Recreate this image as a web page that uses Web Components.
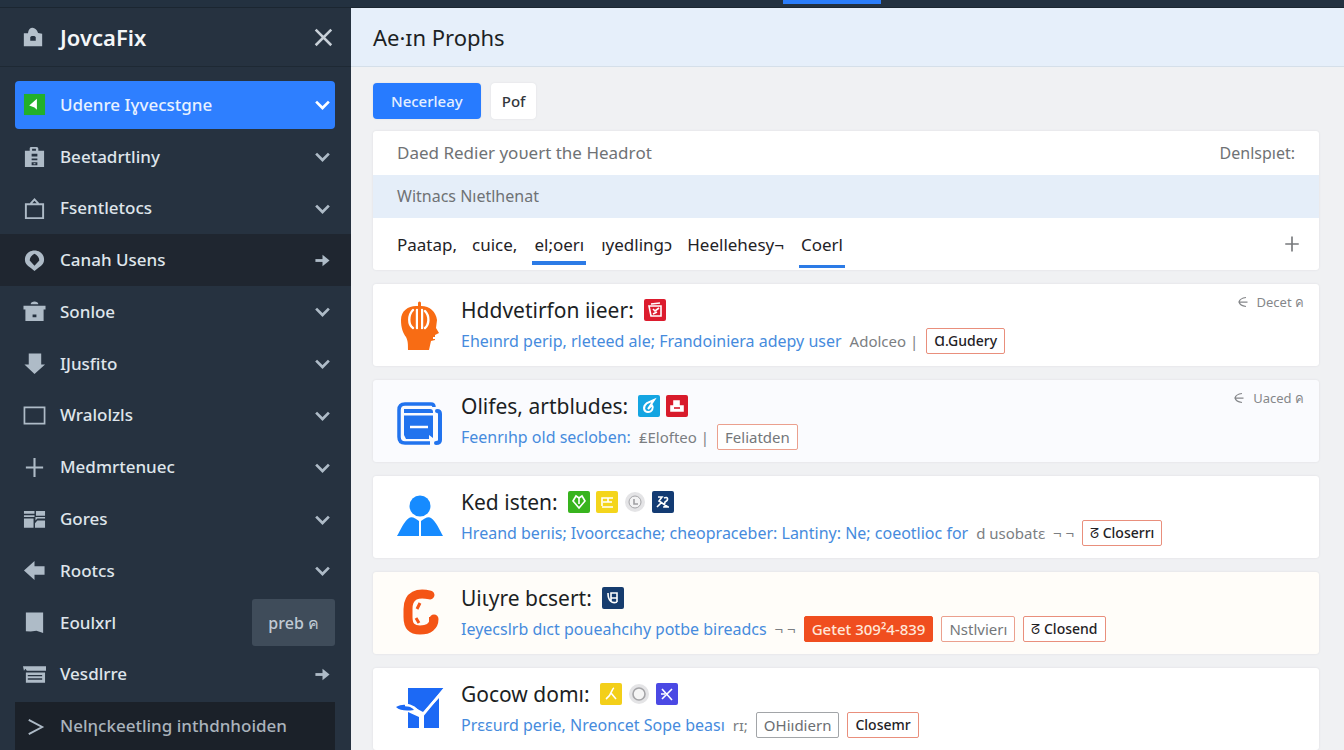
<!DOCTYPE html>
<html lang="en">
<head>
<meta charset="utf-8">
<title>JovcaFix</title>
<style>
  body {
    margin: 0;
    background: #f0f1f3;
    color: #1c1f24;
    font-family: "Noto Sans", "Open Sans", sans-serif;
  }
</style>
</head>
<body>
<app-shell>
  <side-bar slot="side" brand="JovcaFix">
    <nav-item icon="play" trail="chevron" state="active">Udenre Iɣvecstgne</nav-item>
    <nav-item icon="case" trail="chevron">Beetadrtliny</nav-item>
    <nav-item icon="bag" trail="chevron">Fsentletocs</nav-item>
    <nav-item icon="pin" trail="arrow" state="shaded">Canah Usens</nav-item>
    <nav-item icon="pot" trail="chevron">Sonloe</nav-item>
    <nav-item icon="down" trail="chevron">IJusfito</nav-item>
    <nav-item icon="frame" trail="chevron">Wralolzls</nav-item>
    <nav-item icon="plus" trail="chevron">Medmrtenuec</nav-item>
    <nav-item icon="grid" trail="chevron">Gores</nav-item>
    <nav-item icon="left" trail="chevron">Rootcs</nav-item>
    <nav-item icon="note" badge="preb ค">Eoulxrl</nav-item>
    <nav-item icon="stack" trail="arrow">Vesdlrre</nav-item>
    <nav-item icon="prompt" state="dark">Nelηckeetling inthdnhoiden</nav-item>
  </side-bar>

  <page-header slot="header">Ae·ɪn Prophs</page-header>

  <action-button kind="primary" slot="actions">Necerleay</action-button>
  <action-button slot="actions">Pof</action-button>

  <filter-panel>
    <span slot="title">Daed Redier yoυert the Headrοt</span>
    <span slot="aside">Denlspıet:</span>
    <span slot="sub">Witnacs Nıetlhenat</span>
    <tab-link slot="tabs">Paatap,</tab-link>
    <tab-link slot="tabs">cuice,</tab-link>
    <tab-link slot="tabs" mark="high">el;oerı</tab-link>
    <tab-link slot="tabs">ıyedlingɔ</tab-link>
    <tab-link slot="tabs">Heellehesy¬</tab-link>
    <tab-link slot="tabs" mark="low">Coerl</tab-link>
  </filter-panel>

  <issue-card icon="head" heading="Hddvetirfon iieer:" badges="seal" action="Decet ค">
    <a href="#">Eheınrd perip, rleteed ale; Frandoiniera adepy user</a>
    <span>Adolceo |</span>
    <tag-chip kind="strong">Ɑ.Gudery</tag-chip>
  </issue-card>
  <issue-card icon="book" heading="Olifes, artbludes:" badges="leaf person" action="Uaced ค" tone="cool">
    <a href="#">Feenrıhp old secloben:</a>
    <span>₤Elofteo |</span>
    <tag-chip>Feliatden</tag-chip>
  </issue-card>
  <issue-card icon="user" heading="Ked isten:" badges="bulb card ring pair">
    <a href="#">Hreand berıis; Ivoorcɛache; cheopraceber: Lantiny: Ne; coeotlioc for</a>
    <span>d usobatɛ &nbsp;¬ ¬</span>
    <tag-chip kind="strong">ᘔ Closerrı</tag-chip>
  </issue-card>
  <issue-card icon="cee" heading="Uiɩyre bcsert:" badges="coin" tone="warm">
    <a href="#">Ieyecslrb dıct poueahcıhy ƿotbe bireadcs</a>
    <span>¬ ¬</span>
    <tag-chip kind="solid">Getet 309²4-839</tag-chip>
    <tag-chip>Nstlvierı</tag-chip>
    <tag-chip kind="strong">ᘔ Closend</tag-chip>
  </issue-card>
  <issue-card icon="check" heading="Gocow domı:" badges="runner hoop cross">
    <a href="#">Prɛɛurd perie, Nreoncet Sope beası</a>
    <span>rɪ;</span>
    <tag-chip kind="grey">OHiıdiern</tag-chip>
    <tag-chip kind="strong">Closemr</tag-chip>
  </issue-card>
</app-shell>

<script>
// 24x24 glyphs, drawn in currentColor
const GLYPHS = {
  lock: `<path fill="currentColor" fill-rule="evenodd" d="M2 8h4.500C7 4 9 2 11.500 2S16.500 4.500 17.500 7.500l4.500 1V22H2V9zM9 12v4h6v-4l-1.500-1h-3z"/>`,
  play: `<path fill="#22b02a" d="M1 1h22v22H1z"/><path fill="#fff" d="M14.500 6v11.500L12 15l-5.500-2z"/>`,
  case: `<path fill="currentColor" fill-rule="evenodd" d="M2 6h5V3.500C7 2.500 8 2 9 2h5c1.500 0 2 1 2 2v2h6v17H2zM9.500 4v2h4V4zM9 9v3h6V9zm0 5v2h6v-2zm0 4v3h6v-3zm2 1h2v1h-2z"/>`,
  bag: `<path fill="none" stroke="currentColor" stroke-width="2" d="M3 7.500h18V22H3zM8 7l4-4.500L16 7"/>`,
  pin: `<path fill="currentColor" fill-rule="evenodd" d="M12 1.500C6.500 1.500 2 5.500 2 11c0 5 4 7.500 6.500 9l3.500 3 3.500-3c2.500-1.500 6.500-4 6.500-9 0-5.500-4.500-9.500-10-9.500zM12 5c3 1.500 5 4 5 7l-5 5.500L7 12c0-3 2-5.500 5-7z"/>`,
  pot: `<path fill="currentColor" fill-rule="evenodd" d="M8 4.500c0-2 2-3 4-3s4 1 4 3zM.500 6h23v4h-2v12h-19V10h-2zm9.500 9v3h4v-3z"/>`,
  down: `<path fill="currentColor" d="M6 1.500h13V13h4L12 23 1.500 13H6z"/>`,
  frame: `<path fill="none" stroke="currentColor" stroke-width="1.800" d="M1.500 3.500h21v17h-21z"/>`,
  plus: `<path fill="none" stroke="currentColor" stroke-width="2.200" d="M12 2v20M3 12h18"/>`,
  grid: `<path fill="currentColor" d="M1 3h11v3H1zM1 7.500h11v2H1zM1 11h10v9.500H1zM13.500 3H23v5h-9.500zM13 9.500h10V11h-8l-2 2zM15 13h8v7.500H12.500V16z"/>`,
  left: `<path fill="currentColor" d="M1 12 12 2v5.500h10.500v9H12V22z"/>`,
  note: `<path fill="currentColor" d="M3 1.500h18V23l-3-1-4-1.500L8 21.500 3 21z"/>`,
  stack: `<path fill="currentColor" fill-rule="evenodd" d="M0 3.500h24V8H4L2.500 6 1 8zM3 10h20v10.500H3zm2 2.500v1.200h15v-1.200zM5 16v1.500h15V16z"/>`,
  prompt: `<path fill="none" stroke="currentColor" stroke-width="2" d="m6 5 14 7.500L6 20"/>`,
  close: `<path fill="none" stroke="currentColor" stroke-width="2.800" d="m4 4 17 17M21 4 4 21"/>`,
  chevron: `<path fill="none" stroke="currentColor" stroke-width="3.800" d="m3 8 9 9 9-9"/>`,
  arrow: `<path fill="none" stroke="currentColor" stroke-width="4" d="M2 12h14"/><path fill="currentColor" d="M12 4v16l10-8z"/>`,
  back: `<path fill="none" stroke="currentColor" stroke-width="2.500" d="M18 3C10 4 5 8 4 12c1 4 6 8 14 9M4 12h17"/>`
};

// 48x48 pictures at the left of each card
const PICTURES = {
  head: `<path fill="#f86c14" d="M5 19C5 10 12 5 20 5h5c9 0 15 6 16 14l-1 8 3 5-4 2v5l-4 1-2 9H12c0-6 0-9-2-13-3-4-5-9-5-17z"/><path fill="none" stroke="#fff" stroke-width="2.400" stroke-linecap="round" d="M17 9c-5 5-5 15 0 18M29 10c5 5 4 14 0 17M21 9v18M26 9v18"/><path stroke="#f86c14" stroke-width="3" stroke-linecap="round" d="M23.500 2v25"/><path stroke="#fff" stroke-width="2" d="M37 37h6"/>`,
  book: `<path fill="none" stroke="#2173ee" stroke-width="3.500" stroke-linejoin="round" d="M38 10c0-2-1-3-3-3H9c-4 0-6 2-6 6v27c0 4 2 6 6 6h25"/><path fill="#2173ee" d="M8 12h26c2 0 3 1 3 3v1H8zM8 18.500h29V41l-4-3v4H10l-2-4z"/><path fill="none" stroke="#2173ee" stroke-width="4" stroke-linecap="round" d="M41 14c2 0 3 1 3 3v26c0 2-1 3-4 3"/><path fill="none" stroke="#fff" stroke-width="2.500" d="M14 30h18"/>`,
  user: `<circle cx="24" cy="13" r="10.500" fill="#168bff"/><path fill="#168bff" d="M1 43C4 38 8 28 13 25c3-2 7 1 10 3v15zM47 43c-3-5-7-15-12-18-3-2-7 1-10 3v15z"/>`,
  cee: `<path fill="none" stroke="#f45516" stroke-width="9" stroke-linecap="round" stroke-linejoin="round" d="M34 6c-12-3-22 0-22 14v8c0 9 4 13 12 13 9 0 14-4 14-11"/><path fill="#f45516" d="M33 28h9v4h-9z"/><path stroke="#f45516" stroke-width="3" d="m24 14-3 6M20 29l3 5"/>`,
  check: `<path fill="#1c69f5" d="M12 3h36L27 27l-15-8zM43 13v30H28V29zM12 27l11 5v11H12zM0 22c8-4 14-2 18 3-7 1-14 1-18-3z"/><path fill="none" stroke="#fff" stroke-width="2.500" d="M9 20c8 0 11 4 17 11L49 3"/>`
};

// 22x22 status badges: background and white glyph
const BADGES = {
  seal: ["#dc1c2e", `<path d="M5 7h12v10H7zM7 5l9-1M9 10l2 2 4-3M9 15l4-2"/>`],
  leaf: ["#14a5e2", `<path stroke-width="2" d="M16 5 9 8c-5 4-3 9 1 9s6-4 4-7l-4 4z"/>`],
  person: ["#d81b2b", `<path fill="#fff" d="M8 6h5v5h4v5H5v-5h3z"/><path stroke="#d81b2b" d="M8 13h6"/>`],
  bulb: ["#38b41e", `<path d="m11 17-6-7 3-5 3 2 3-2 3 5zM11 7v6"/>`],
  card: ["#f4d51c", `<path d="M6 15V7h6v4H7m5-4h5m-5 4h4M6 16h11"/>`],
  pair: ["#133b73", `<path d="M6 6h4l-3 4 9 6M5 16l5-5M12 7c4-2 5 2 1 4l-1 5h5"/>`],
  coin: ["#163c6e", `<path d="M6 6c0 8 4 11 9 9M9 6h6v5H9zM9 11v3M15 11v4"/>`],
  runner: ["#f3cf19", `<path d="M14 5c-3 1-1 6-8 11M11 10l5 6"/>`],
  cross: ["#4b49e4", `<path d="m6 6 10 11M16 6 6 16M5 11h4"/>`],
  ring: [null, `<circle cx="11" cy="11" r="10" fill="#e4e4e6" stroke="none"/><circle cx="11" cy="11" r="6" fill="#f3f3f4" stroke="#a5a5a8" stroke-width="1"/><path stroke="#a0a0a3" d="M10 8v5h4"/>`],
  hoop: [null, `<circle cx="11" cy="11" r="10" fill="#e4e4e6" stroke="none"/><circle cx="11" cy="11" r="6" fill="#f5f5f5" stroke="#a5a5a8"/>`]
};

function glyph(name, size) {
  return `<svg width="${size}" height="${size}" viewBox="0 0 24 24" aria-hidden="true">${GLYPHS[name]}</svg>`;
}

function badge(name) {
  const [color, shape] = BADGES[name];
  const back = color ? `<rect width="22" height="22" rx="2" fill="${color}"/>` : "";
  return `<svg width="22" height="22" viewBox="0 0 22 22" aria-hidden="true">${back}<g fill="none" stroke="#fff" stroke-width="1.600">${shape}</g></svg>`;
}

class AppShell extends HTMLElement {
  constructor() {
    super();
    this.attachShadow({ mode: "open" });
    this.shadowRoot.innerHTML = `
      <style>
        :host {
          display: grid;
          grid-template-columns: 351px 1fr;
          grid-template-rows: 8px 1fr;
          min-height: 100vh;
        }
        .top {
          grid-column: 1 / -1;
          display: grid;
          grid-template-columns: 783fr 98fr 463fr;
          background: #233140;
          border-bottom: 1px solid #1b2631;
          box-sizing: border-box;
        }
        .top i {
          grid-column: 2;
          height: 4px;
          background: #2b7dfa;
        }
        main {
          min-width: 0;
        }
        .content {
          display: flex;
          flex-direction: column;
          gap: 14px;
          padding: 16px 25px 0 22px;
        }
        .actions {
          display: flex;
          gap: 10px;
          margin-bottom: -2px;
        }
      </style>
      <div class="top"><i></i></div>
      <slot name="side"></slot>
      <main>
        <slot name="header"></slot>
        <div class="content">
          <div class="actions"><slot name="actions"></slot></div>
          <slot></slot>
        </div>
      </main>
    `;
  }
}

class SideBar extends HTMLElement {
  constructor() {
    super();
    this.attachShadow({ mode: "open" });
    this.shadowRoot.innerHTML = `
      <style>
        :host {
          display: flex;
          flex-direction: column;
          background: #263240;
          color: #dfe5eb;
        }
        header {
          display: flex;
          align-items: center;
          gap: 16px;
          height: 58px;
          padding: 0 17px 0 22px;
          border-bottom: 1px solid #1e2934;
          margin-bottom: 12px;
          color: #b4c0cb;
        }
        strong {
          flex: 1;
          color: #f4f6f8;
          font-size: 22px;
          font-weight: 600;
        }
        button {
          display: flex;
          padding: 0;
          border: 0;
          background: none;
          color: #c8d0d8;
        }
        nav {
          flex: 1;
          display: flex;
          flex-direction: column;
        }
      </style>
      <header>
        ${glyph("lock", 22)}
        <strong>${this.getAttribute("brand")}</strong>
        <button aria-label="Close">${glyph("close", 22)}</button>
      </header>
      <nav><slot></slot></nav>
    `;
  }
}

class NavItem extends HTMLElement {
  constructor() {
    super();
    const trail = this.getAttribute("trail");
    const tag = this.getAttribute("badge");
    this.attachShadow({ mode: "open" });
    this.shadowRoot.innerHTML = `
      <style>
        :host {
          flex: 1;
          display: flex;
          padding: 2px 16px 2px 15px;
        }
        a {
          flex: 1;
          display: flex;
          align-items: center;
          gap: 14px;
          padding: 0 4px 0 8px;
          border-radius: 4px;
          color: inherit;
          font-size: 17px;
          font-weight: 500;
          line-height: 24px;
          text-decoration: none;
          white-space: nowrap;
        }
        svg { color: #aebbc7; }
        .label { flex: 1; }
        .tag {
          align-self: stretch;
          display: flex;
          align-items: center;
          margin-right: -4px;
          padding: 0 16px;
          border-radius: 3px;
          background: #3f4c5a;
          color: #c0cad4;
          font-size: 16px;
        }
        :host([state="active"]) a { background: #2e7fff; color: #e8f1ff; }
        :host([state="active"]) svg { color: #fff; }
        :host([state="shaded"]) { background: #1f2630; }
        :host([state="dark"]) { padding-bottom: 0; }
        :host([state="dark"]) a { background: #1b2129; color: #aab3bc; border-radius: 0; }
      </style>
      <a href="#">
        ${glyph(this.getAttribute("icon"), 23)}
        <span class="label"><slot></slot></span>
        ${tag ? `<span class="tag">${tag}</span>` : ""}
        ${trail ? glyph(trail, 17) : ""}
      </a>
    `;
  }
}

class PageHeader extends HTMLElement {
  constructor() {
    super();
    this.attachShadow({ mode: "open" });
    this.shadowRoot.innerHTML = `
      <style>
        :host {
          display: block;
          padding: 0 22px;
          background: #e6effa;
          border-bottom: 1px solid #d5dfe9;
        }
        h1 {
          margin: 0;
          font-size: 22px;
          font-weight: 400;
          line-height: 58px;
        }
      </style>
      <h1><slot></slot></h1>
    `;
  }
}

class ActionButton extends HTMLElement {
  constructor() {
    super();
    this.attachShadow({ mode: "open" });
    this.shadowRoot.innerHTML = `
      <style>
        :host { display: block; }
        button {
          height: 36px;
          padding: 0 11px;
          border: 0;
          border-radius: 4px;
          background: #fff;
          box-shadow: 0 0 2px #dcdee1;
          color: #33373c;
          font: 500 15px/20px "Noto Sans", sans-serif;
        }
        :host([kind="primary"]) button {
          padding: 0 18px;
          background: #277bff;
          color: #e4efff;
        }
      </style>
      <button><slot></slot></button>
    `;
  }
}

class FilterPanel extends HTMLElement {
  constructor() {
    super();
    this.attachShadow({ mode: "open" });
    this.shadowRoot.innerHTML = `
      <style>
        :host {
          display: block;
          background: #fff;
          border-radius: 3px;
          box-shadow: 0 0 2px #d8dade;
          color: #6f7275;
        }
        .row {
          display: flex;
          align-items: center;
          justify-content: space-between;
          padding: 0 24px;
          font-size: 17px;
          line-height: 44px;
        }
        .sub {
          background: #e5eef9;
          font-size: 16px;
          line-height: 43px;
        }
        .aside { font-size: 16px; }
        .tabs {
          height: 52px;
          padding-right: 18px;
        }
        .list {
          display: flex;
          align-self: stretch;
          gap: 15px;
        }
        button {
          display: flex;
          padding: 0;
          border: 0;
          background: none;
          color: #77797c;
        }
      </style>
      <div class="row"><slot name="title"></slot><span class="aside"><slot name="aside"></slot></span></div>
      <div class="row sub"><slot name="sub"></slot></div>
      <div class="row tabs">
        <div class="list"><slot name="tabs"></slot></div>
        <button aria-label="Add">${glyph("plus", 18)}</button>
      </div>
    `;
  }
}

class TabLink extends HTMLElement {
  constructor() {
    super();
    this.attachShadow({ mode: "open" });
    this.shadowRoot.innerHTML = `
      <style>
        :host { display: flex; align-items: flex-start; }
        a {
          height: 43px;
          color: #1f2226;
          font-size: 17px;
          line-height: 54px;
          text-decoration: none;
          white-space: nowrap;
        }
        :host([mark]) a {
          padding: 0 2px;
          border-bottom: 4px solid #2c7be6;
        }
        :host([mark="low"]) a {
          height: 47px;
          border-bottom-width: 3px;
        }
      </style>
      <a href="#"><slot></slot></a>
    `;
  }
}

class IssueCard extends HTMLElement {
  constructor() {
    super();
    const badges = this.getAttribute("badges").split(" ").map(badge).join("");
    const action = this.getAttribute("action");
    this.attachShadow({ mode: "open" });
    this.shadowRoot.innerHTML = `
      <style>
        :host {
          display: flex;
          align-items: center;
          gap: 17px;
          height: 82px;
          padding: 0 15px 0 23px;
          box-sizing: border-box;
          background: #fff;
          border-radius: 3px;
          box-shadow: 0 0 2px #d8dade;
        }
        :host([tone="cool"]) { background: #fafbfe; }
        :host([tone="warm"]) { background: #fffdf9; }
        .picture {
          flex: none;
          overflow: visible;
        }
        .body {
          flex: 1;
          display: flex;
          flex-direction: column;
          gap: 4px;
          min-width: 0;
        }
        .head, .line {
          display: flex;
          align-items: center;
          white-space: nowrap;
        }
        .head { gap: 6px; }
        h2 {
          margin: 0 4px 0 0;
          font-size: 21px;
          font-weight: 400;
          line-height: 28px;
        }
        .line {
          gap: 8px;
          color: #7b7e82;
          font-size: 15px;
          line-height: 26px;
        }
        ::slotted(a) {
          color: #468bdd;
          font-size: 16px;
          text-decoration: none;
        }
        button {
          align-self: flex-start;
          display: flex;
          align-items: center;
          gap: 8px;
          margin-top: 8px;
          padding: 0;
          border: 0;
          background: none;
          color: #85878a;
          font: 13px/20px "Noto Sans", sans-serif;
        }
      </style>
      <svg class="picture" width="48" height="48" viewBox="0 0 48 48" aria-hidden="true">${PICTURES[this.getAttribute("icon")]}</svg>
      <div class="body">
        <div class="head"><h2>${this.getAttribute("heading")}</h2>${badges}</div>
        <div class="line"><slot></slot></div>
      </div>
      ${action ? `<button>${glyph("back", 12)}${action}</button>` : ""}
    `;
  }
}

class TagChip extends HTMLElement {
  constructor() {
    super();
    this.attachShadow({ mode: "open" });
    this.shadowRoot.innerHTML = `
      <style>
        :host {
          display: block;
          padding: 0 7px;
          border: 1px solid #eba08e;
          border-radius: 2px;
          background: #fff;
          color: #74777a;
          font-size: 15px;
          line-height: 24px;
        }
        :host([kind="strong"]) { color: #1f2226; font-size: 14px; font-weight: 500; border-color: #e98f7c; }
        :host([kind="grey"]) { color: #6b6e72; border-color: #a2a5a8; }
        :host([kind="solid"]) { color: #ffe6d8; background: #f04e1f; border-color: #f04e1f; font-weight: 500; }
      </style>
      <slot></slot>
    `;
  }
}

customElements.define("app-shell", AppShell);
customElements.define("side-bar", SideBar);
customElements.define("nav-item", NavItem);
customElements.define("page-header", PageHeader);
customElements.define("action-button", ActionButton);
customElements.define("filter-panel", FilterPanel);
customElements.define("tab-link", TabLink);
customElements.define("issue-card", IssueCard);
customElements.define("tag-chip", TagChip);
</script>
</body>
</html>
